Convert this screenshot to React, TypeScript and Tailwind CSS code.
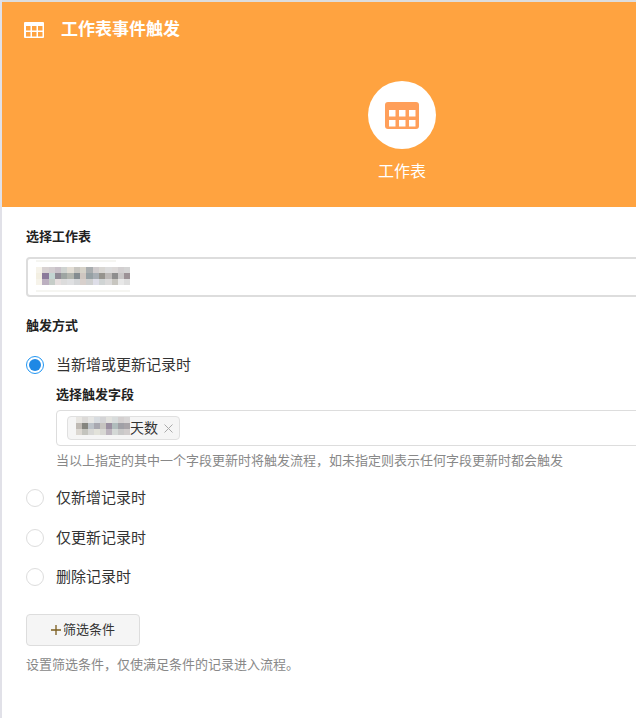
import React from 'react';

const sheetBlur = [
  ['#f6f3ea', '#d8d2d2', '#d2cdd0', '#c9c1c9', '#cfd3d0', '#e2ddd4', '#c8c6c0', '#d6d2c8', '#a9adaf', '#cfcbcc', '#d8d6d2', '#dcdcdc', '#dcd9d8', '#d2cfd0', '#d4d4d4'],
  ['#f3efe2', '#8b7a9a', '#c3d5d2', '#8f8a96', '#9ea5a2', '#b2b5ae', '#848c90', '#cfc6c0', '#96a0a4', '#a8aeb4', '#96948e', '#bdbab8', '#8e8e8e', '#c8c6c6', '#9c9296'],
  ['#f6f3ea', '#bcb0c0', '#c6cdc8', '#e6dfdf', '#dcdcdc', '#dfe0e2', '#d4d6d8', '#d8d0cc', '#cfd0d0', '#dedee8', '#d0d4d4', '#dbdada', '#c8c6c0', '#e8e8e8', '#dedede'],
];

const chipBlur = [
  ['#e8e6e2', '#dcdad8', '#e6e6e4', '#d8dce0', '#d4d4d6', '#e2e2de', '#d8dcdc', '#d4d0d0', '#d8d6d6'],
  ['#bfbab4', '#85857f', '#bcc2c8', '#a8a8b0', '#c6c4c0', '#9a8fa0', '#b0bcbc', '#a0a0a6', '#a8a4a8'],
  ['#dcd8d2', '#c4c4be', '#d8d8d6', '#e2e2da', '#d8d8d4', '#bcb4be', '#d4d8d6', '#c8c8c8', '#d0cccc'],
];

const Mosaic = ({ rows, cell }: { rows: string[][]; cell: string }) => (
  <div className="flex flex-col">
    {rows.map((row, r) => (
      <div key={r} className="flex">
        {row.map((color, c) => (
          <div key={c} className={cell} style={{ backgroundColor: color }}></div>
        ))}
      </div>
    ))}
  </div>
);

const Radio = ({ label, checked, className }: { label: string; checked?: boolean; className: string }) => (
  <div className={`flex items-center h-5 ${className}`}>
    {checked ? (
      <div className="w-[18px] h-[18px] rounded-full border border-[#2196f3] flex items-center justify-center">
        <div className="w-3 h-3 rounded-full bg-[#1e88e5]"></div>
      </div>
    ) : (
      <div className="w-[18px] h-[18px] rounded-full border border-[#ddd]"></div>
    )}
    <span className="ml-3 text-[15px] text-[#333]">{label}</span>
  </div>
);

const GridIcon = () => (
  <svg width="20" height="16" viewBox="0 0 20 16" className="block">
    <path
      fill="#fff"
      fillRule="evenodd"
      d="M1 0h18a1 1 0 0 1 1 1v14a1 1 0 0 1-1 1H1a1 1 0 0 1-1-1V1a1 1 0 0 1 1-1zM2 4v4.500h4.500V4zm6 0v4.500h4.500V4zm6 0v4.500h4.500V4zM2 10v4.500h4.500V10zm6 0v4.500h4.500V10zm6 0v4.500h4.500V10z"
    />
  </svg>
);

const SheetIcon = () => (
  <svg width="34" height="27" viewBox="0 0 34 27" className="block">
    <rect width="34" height="27" rx="3" fill="#ff9f5a" />
    <g fill="#fff">
      <rect x="4" y="8" width="6.500" height="6.500" />
      <rect x="14" y="8" width="6.500" height="6.500" />
      <rect x="24" y="8" width="6.500" height="6.500" />
      <rect x="4" y="18" width="6.500" height="6.500" />
      <rect x="14" y="18" width="6.500" height="6.500" />
      <rect x="24" y="18" width="6.500" height="6.500" />
    </g>
  </svg>
);

export default function App() {
  return (
    <div className="w-[636px] h-[718px] overflow-hidden flex bg-white font-['Liberation_Sans','Noto_Sans_CJK_SC',sans-serif]">
      <div className="w-[2px] shrink-0 bg-[#e1e1e8]"></div>
      <div className="w-[800px] shrink-0 flex flex-col">
        <div className="h-[2px] bg-[#dddddd]"></div>
        <div className="h-[205px] bg-[#ffa340] flex flex-col">
          <div className="flex items-center pt-[19px] pl-[22px]">
            <GridIcon />
            <h1 className="ml-[17px] text-[17px] leading-[18px] font-bold text-white">工作表事件触发</h1>
          </div>
          <div className="flex flex-col items-center mt-[42px]">
            <div className="w-[68px] h-[68px] rounded-full bg-white flex items-center justify-center">
              <SheetIcon />
            </div>
            <p className="mt-[13px] text-base leading-5 text-white">工作表</p>
          </div>
        </div>

        <div className="pl-6 pr-6 flex flex-col">
          <label className="mt-[21px] text-[13px] leading-[18px] font-bold text-[#222]">选择工作表</label>
          <div className="mt-[11px] h-10 rounded border-2 border-[#dddddd] flex items-center pl-2">
            <div className="flex flex-col mb-[2px]">
              <div className="h-[2px] w-[80px] bg-[#f5f5f1] mb-[5px]"></div>
              <Mosaic rows={sheetBlur} cell="w-[6.3px] h-[6px]" />
              <div className="h-[2px] w-[94px] bg-[#f5f5f1] mt-[5px]"></div>
            </div>
          </div>

          <label className="mt-[20px] text-[13px] leading-[18px] font-bold text-[#222]">触发方式</label>

          <Radio label="当新增或更新记录时" checked className="mt-[20px]" />

          <div className="pl-[30px] flex flex-col">
            <label className="mt-[11px] text-[13px] leading-[18px] font-bold text-[#222]">选择触发字段</label>
            <div className="mt-[6px] h-9 rounded border border-[#dddddd] flex items-center pl-[10px]">
              <div className="h-6 w-[113px] rounded bg-[#f5f5f5] border border-[#e0e0e0] flex items-center pl-[8px]">
                <div className="self-start">
                  <Mosaic rows={chipBlur} cell="w-[6px] h-[6px]" />
                </div>
                <span className="text-sm text-[#333]">天数</span>
                <span className="ml-[6px] text-[#aaaaaa]">
                  <svg width="9" height="9" viewBox="0 0 9 9" className="block">
                    <path d="M0.500 0.500l8 8M8.500 0.500l-8 8" stroke="currentColor" strokeWidth="1" fill="none" />
                  </svg>
                </span>
              </div>
            </div>
            <p className="mt-[6px] text-[13px] leading-[18px] text-[#888]">
              当以上指定的其中一个字段更新时将触发流程，如未指定则表示任何字段更新时都会触发
            </p>
          </div>

          <Radio label="仅新增记录时" className="mt-[18px]" />
          <Radio label="仅更新记录时" className="mt-[20px]" />
          <Radio label="删除记录时" className="mt-[19px]" />

          <button className="mt-[27px] w-[114px] h-8 rounded border border-[#dddddd] bg-[#f5f5f5] flex items-center justify-center text-[13px] text-[#333]">
            <span className="text-[#7a5c1e] mr-[2px]">
              <svg width="10" height="10" viewBox="0 0 10 10" className="block">
                <path d="M5 0v10M0 5h10" stroke="currentColor" strokeWidth="1.300" fill="none" />
              </svg>
            </span>
            筛选条件
          </button>
          <p className="mt-[10px] text-[13px] leading-[18px] text-[#888]">
            设置筛选条件，仅使满足条件的记录进入流程。
          </p>
        </div>
      </div>
    </div>
  );
}
